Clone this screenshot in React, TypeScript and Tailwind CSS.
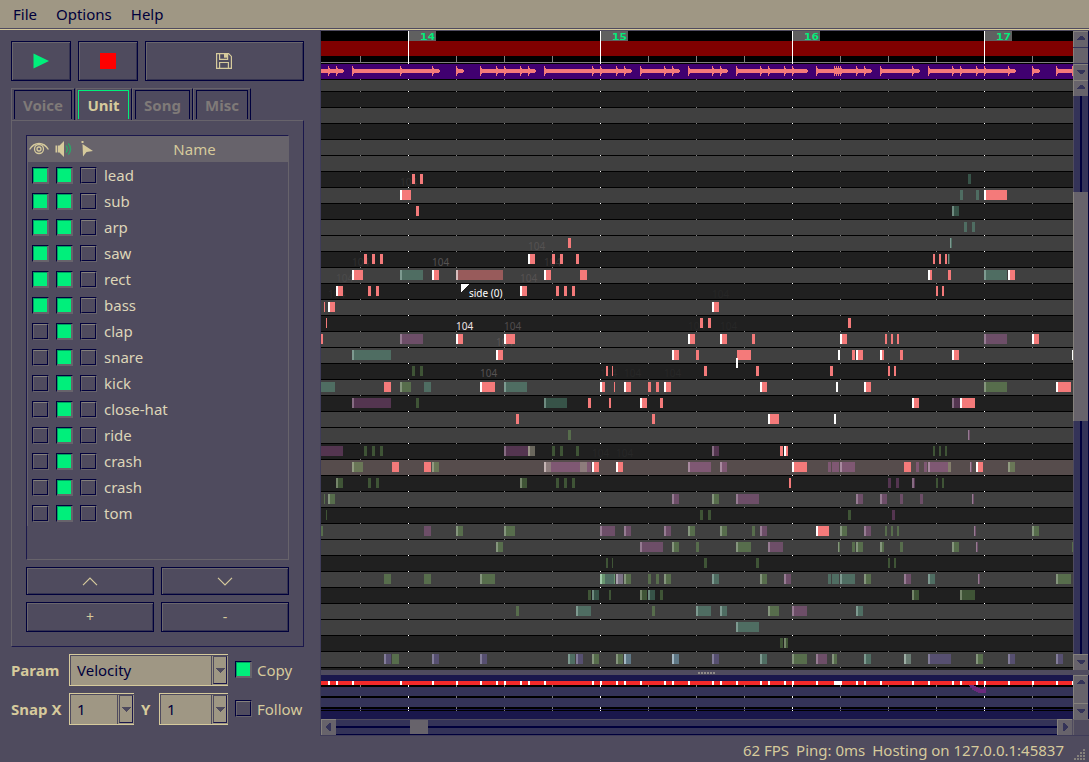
import React from "react";

const darkRows = new Set([1, 3, 6, 8, 11, 13, 15, 18, 20, 23, 25, 27, 30, 32, 35, 37]);
const selectedRow = 24;

// One string per lane: kind, start and length of each note. A capital kind has a velocity head.
const lanes: Record<number, string> = {
  6: "r412:3 r420:3 t968:3",
  7: "R400:11 t960:3 t976:3 R984:23",
  8: "r416:3 T952:7",
  9: "t964:3 t972:3",
  10: "r568:3 T950:2",
  11: "r364:3 r372:3 r380:3 R528:7 r552:3 r560:3 r576:3 r933:2 r939:2 r945:2 T948:2",
  12: "R352:11 T400:23 R432:7 D456:47 R544:7 r580:7 R928:4 r948:3 T984:23 R1008:7",
  13: "R336:7 r368:3 r376:3 R520:7 r556:3 r564:3 r572:3 r936:2 r942:2",
  14: "r324:1 R328:7 R712:7",
  15: "r326:1 r700:3 r708:3 r848:3",
  16: "r321:2 P400:23 R456:7 R504:11 R688:7 R720:7 r752:3 R840:7 r885:2 r891:2 r897:2 P984:23 R1032:7",
  17: "T352:39 R496:7 R672:7 r696:3 r737:14 R838:2 r852:3 R856:7 R880:4 r900:3 R952:7 R1072:1",
  18: "g412:3 g420:3 r606:2 r612:1 r704:3 r756:3 r830:3 r888:2 r894:2",
  19: "t321:14 r384:7 G400:11 t424:7 R480:15 T504:23 R600:5 r614:1 R624:7 r648:3 r656:3 R664:7 R760:7 R836:2 R864:7 G984:23 R1056:15",
  20: "P352:39 g416:3 T544:23 r588:3 r609:2 R640:7 r660:3 R912:7 P952:8 R960:15",
  21: "r516:3 r652:3 R768:11 R834:2",
  22: "g568:3 P968:2",
  23: "p321:22 g364:3 g372:3 g380:3 P504:24 M528:7 g552:3 g560:3 g576:3 P712:7 r780:3 R784:4 g933:2 g939:2 g945:2",
  24: "G352:11 r392:7 r424:7 G432:7 M544:7 p551:40 m580:7 R592:7 R616:7 P688:23 P720:7 R792:15 p828:3 p832:7 P840:15 r904:7 p916:3 p924:3 P928:20 o948:3 P970:2 R976:7 G1008:7",
  25: "G336:7 g368:3 g376:3 G520:7 g556:3 g564:3 g572:3 r789:2 p888:3 p896:3 P912:3 g936:2 g942:2",
  26: "g324:1 G328:7 P672:7 G712:7 P736:23 P856:7 P880:7 p900:3 p920:3 P972:2",
  27: "g326:1 g700:3 g708:3 g848:3 p892:3",
  28: "g321:2 p424:7 G456:7 G504:11 P600:15 P624:7 P664:7 G688:7 G720:7 g752:3 P760:7 R816:13 G840:7 P864:7 g885:2 g891:2 g897:2 P974:2 G1032:7",
  29: "G496:7 P640:23 G672:7 g696:3 G736:15 P768:15 G838:2 g852:3 G856:7 G880:4 g900:3 G952:7 P976:2 g1072:1",
  30: "g606:2 g612:1 g704:3 g756:3 g888:2 g894:2",
  31: "g384:7 g424:7 G480:15 T600:15 E600:5 e614:1 L616:7 G624:7 g648:3 g656:3 G664:7 T712:7 G760:7 P784:7 t828:3 t832:7 T840:15 G864:7 P904:7 T928:7 P978:2 G1056:15",
  32: "g588:3 T592:7 g609:2 G640:7 T648:7 g660:3 G912:7 G960:15",
  33: "g516:3 T576:15 g652:3 T696:15 T720:7 G768:11 P792:15 T856:7",
  34: "T736:23",
  35: "g780:3 G784:4",
  36: "S384:7 g392:7 S432:7 S480:7 T568:7 S576:7 G592:7 G616:7 B624:7 B672:7 S712:7 T760:7 G792:15 P816:11 G832:5 T864:7 C904:7 S928:23 G976:7 S1008:7 S1056:7",
};

// [light lane, dark lane, selected lane]
const bodyColors: Record<string, [string, string, string]> = {
  r: ["#f47a7a", "#f47a7a", "#f47a7a"],
  d: ["#985b5b", "#985b5b", "#985b5b"],
  g: ["#576d4c", "#3f5436", "#6a7757"],
  t: ["#4f6d62", "#375348", "#5d7268"],
  p: ["#6d4e68", "#543550", "#7f5873"],
  m: ["#77706a", "#6a675d", "#8d7c7c"],
  o: ["#7f7d6c", "#6a675d", "#847e6b"],
  s: ["#564f70", "#3e3758", "#564f70"],
  b: ["#5f7886", "#47606e", "#5f7886"],
  l: ["#7b7284", "#7b7284", "#7b7284"],
  c: ["#697b72", "#697b72", "#697b72"],
  e: ["#6a9770", "#6a9770", "#6a9770"],
};
const headColors: Record<string, [string, string, string]> = {
  r: ["#ffffff", "#ffffff", "#ffffff"],
  d: ["#d6bcbc", "#d6bcbc", "#d6bcbc"],
  g: ["#84957c", "#748569", "#919b80"],
  t: ["#7d9a90", "#6d8a7f", "#8a9b92"],
  p: ["#967b92", "#866b82", "#a98aa0"],
  m: ["#a8a09c", "#999587", "#c4b3b3"],
  o: ["#a8a09c", "#999587", "#c4b3b3"],
  s: ["#827c99", "#726c89", "#827c99"],
  b: ["#a3b7c3", "#93a7b3", "#a3b7c3"],
  l: ["#a9a0ae", "#a9a0ae", "#a9a0ae"],
  c: ["#9cada4", "#9cada4", "#9cada4"],
  e: ["#9fc9a8", "#9fc9a8", "#9fc9a8"],
};

const measures = [408, 600, 792, 984];
const beats = [360, 456, 504, 552, 648, 696, 744, 840, 888, 936, 1032];

const waves: [number, number, number[]][] = [
  [321, 343, [328, 336]],
  [352, 439, [352, 400, 432]],
  [456, 463, [456]],
  [480, 535, [480, 496, 504, 520, 528]],
  [544, 631, [544, 592, 600, 616, 624]],
  [640, 679, [640, 664, 672]],
  [688, 727, [688, 712, 720]],
  [736, 807, [736, 760, 768, 784, 792]],
  [816, 871, [816, 834, 836, 838, 840, 856, 864]],
  [880, 919, [880, 912]],
  [928, 1015, [928, 952, 960, 976, 984, 1008]],
  [1032, 1039, [1032]],
  [1056, 1073, [1056, 1072]],
];

const velocityLabels: [number, number, string][] = [
  [400, 186, "#303030"], [352, 266, "#303030"], [336, 282, "#4b4b4b"], [328, 298, "#2b2b2b"],
  [432, 266, "#555252"], [528, 250, "#555252"], [544, 266, "#373535"], [520, 282, "#565252"],
  [456, 330, "#f0e2e2"], [504, 330, "#504c4c"], [496, 346, "#5a5656"], [480, 377, "#565252"],
  [600, 377, "#282828"], [624, 377, "#272727"], [664, 377, "#272727"], [592, 457, "#272727"],
  [616, 457, "#272727"], [712, 298, "#262626"], [688, 330, "#272727"], [720, 330, "#272727"],
];

const onsets = [
  328, 336, 352, 400, 432, 456, 480, 496, 504, 520, 528, 544, 592, 600, 616, 624, 640, 664, 672, 688, 712, 720, 736,
  760, 768, 784, 792, 816, 834, 836, 838, 840, 856, 864, 880, 912, 928, 952, 960, 976, 984, 1008, 1032, 1056, 1072,
];

function Lane({ row, text }: { row: number; text: string }) {
  const tone = row === selectedRow ? 2 : darkRows.has(row) ? 1 : 0;
  const y = 78 + row * 16;
  return (
    <g>
      {text.split(" ").map((note) => {
        const kind = note[0].toLowerCase();
        const hasHead = note[0] !== kind;
        const [x, w] = note.slice(1).split(":").map(Number);
        const head = w === 2 && kind !== "r" ? 1 : Math.min(2, w);
        return (
          <g key={note}>
            <rect x={x} y={y} width={w} height={10} fill={bodyColors[kind][tone]} />
            {hasHead && <rect x={x} y={y} width={head} height={10} fill={headColors[kind][tone]} />}
          </g>
        );
      })}
    </g>
  );
}

function PianoRoll() {
  const rows = Array.from({ length: 38 }, (_, i) => i);
  return (
    <svg viewBox="321 31 752 639" width={752} height={639} shapeRendering="crispEdges" className="block shrink-0">
      <rect x={321} y={31} width={752} height={639} fill="#000" />
      <rect x={321} y={41} width={752} height={15} fill="#800000" />
      <rect x={321} y={62} width={752} height={1} fill="#808080" />
      {beats.map((x) => (
        <rect key={x} x={x} y={56} width={1} height={6} fill="#808080" />
      ))}
      {measures.map((x, i) => (
        <g key={x}>
          <rect x={x + 1} y={31} width={27} height={10} fill="#606060" />
          <rect x={x} y={31} width={1} height={33} fill="#fff" />
          <text
            x={x + 12}
            y={39.5}
            textLength={15}
            lengthAdjust="spacingAndGlyphs"
            className="fill-[#00ef7b] font-['DejaVu_Sans_Mono',monospace] text-[9px] font-bold"
          >
            {14 + i}
          </text>
        </g>
      ))}
      <rect x={321} y={64} width={752} height={15} fill="#400070" />
      {waves.map(([start, end, ticks]) => (
        <g key={start} fill="#f47a7a">
          <rect x={start} y={69} width={end - start} height={4} />
          <rect x={end} y={70} width={end < 1073 ? 1 : 0} height={2} />
          {ticks.map((x) => (
            <g key={x}>
              <rect x={x} y={66} width={1} height={10} />
              <rect x={x + 1} y={68} width={1} height={6} />
            </g>
          ))}
        </g>
      ))}
      {rows.map((r) => (
        <rect
          key={r}
          x={321}
          y={r === 0 ? 80 : 76 + r * 16}
          width={752}
          height={r === 0 ? 11 : r === 37 ? 2 : 15}
          fill={r === selectedRow ? "#564c4c" : darkRows.has(r) ? "#202020" : "#404040"}
        />
      ))}
      {[79, ...rows.slice(0, 37).map((r) => 91 + r * 16)].map((y) => (
        <g key={y}>
          {beats.map((x) => (
            <rect key={x} x={x} y={y} width={1} height={1} fill="#808080" />
          ))}
          {measures.map((x) => (
            <rect key={x} x={x} y={y} width={1} height={1} fill="#fff" />
          ))}
        </g>
      ))}
      {velocityLabels.map(([x, y, fill]) => (
        <text key={`${x}-${y}`} x={x} y={y} fill={fill} className="font-['Noto_Sans',sans-serif] text-[10px]">
          104
        </text>
      ))}
      {Object.entries(lanes).map(([row, text]) => (
        <Lane key={row} row={Number(row)} text={text} />
      ))}
      <rect x={736} y={358} width={2} height={10} fill="#fff" />
      <path d="M461 284h8l-8 8z" fill="#fff" />
      <text x={469} y={297} className="fill-white font-['Noto_Sans',sans-serif] text-[10px]">
        side (0)
      </text>
    </svg>
  );
}

function ParamLane() {
  return (
    <svg viewBox="321 675 752 44" width={752} height={44} shapeRendering="crispEdges" className="block shrink-0">
      <rect x={321} y={675} width={752} height={44} fill="#1a174c" />
      <rect x={321} y={685} width={752} height={26} fill="#000" />
      <rect x={321} y={687} width={752} height={9} fill="#343358" />
      <rect x={321} y={698} width={752} height={9} fill="#343358" />
      <rect x={321} y={709} width={752} height={1} fill="#1a174c" />
      <rect x={321} y={681} width={752} height={4} fill="#f42a2a" />
      <path d="M969 685h5v1h2v1h2v1h2v1h4v-2h2v6h-8v-1h-2v-1h-2v-1h-2v-2h-2v-2h-1z" fill="#6a2a7d" />
      {[...beats, ...measures].map((x) => (
        <g key={x} fill={measures.includes(x) ? "#fff" : "#808080"}>
          <rect x={x} y={685} width={1} height={2} />
          <rect x={x} y={696} width={1} height={2} />
          <rect x={x} y={707} width={1} height={2} />
          <rect x={x} y={710} width={1} height={1} />
        </g>
      ))}
      {onsets.map((x) => (
        <rect key={x} x={x} y={681} width={2} height={4} fill="#fff" />
      ))}
    </svg>
  );
}

const arrowShapes = {
  up: "M4 9V8L7 5h2l3 3v1z",
  down: "M4 6v1l3 3h2l3-3V6z",
  left: "M10 4H9L5 7v2l4 3h1z",
  right: "M6 4h1l4 3v2l-4 3H6z",
};

function ArrowButton({ dir }: { dir: keyof typeof arrowShapes }) {
  return (
    <div className="h-4 w-[15px] shrink-0 border-t border-l border-[#85817c] bg-[#67636b]">
      <svg viewBox="1 1 14 15" className="block h-[15px] w-[14px]" shapeRendering="crispEdges">
        <path d={arrowShapes[dir]} fill="#343358" />
      </svg>
    </div>
  );
}

function Handle({ className }: { className: string }) {
  return <div className={`w-[15px] shrink-0 border-l border-[#85817c] bg-[#67636b] ${className}`} />;
}

function Track({ className }: { className: string }) {
  return (
    <div className={`flex w-[15px] justify-center border-l border-[#4f4b5e] bg-[#343358] ${className}`}>
      <div className="w-0.5 bg-[#00003c]" />
    </div>
  );
}

function VScroll({ className, children }: { className: string; children: React.ReactNode }) {
  return <div className={`flex w-4 flex-col border-r border-[#00003c] bg-[#343358] ${className}`}>{children}</div>;
}

function Button({ className, children }: { className: string; children: React.ReactNode }) {
  return (
    <button
      className={`flex items-center justify-center border border-[#00003c] shadow-[inset_1px_1px_#6a666c,inset_-1px_-1px_#343250] ${className}`}
    >
      {children}
    </button>
  );
}

function Check({ on }: { on: boolean }) {
  return (
    <span className="block size-[17px] shrink-0 border border-t-[#00003c] border-r-[#67636b] border-b-[#67636b] border-l-[#00003c]">
      <span
        className={
          on
            ? "block size-[15px] border-r border-b border-[#67636b] bg-[#00ef7b] shadow-[inset_1px_1px_#00a060]"
            : "block size-[15px] border border-[#00003c] border-t-[#85817c] border-l-[#67636b]"
        }
      />
    </span>
  );
}

function Combo({ value, className }: { value: string; className: string }) {
  return (
    <div
      className={`flex h-8 shrink-0 items-center border-y border-l border-[#d6ca9c] bg-[#9f9784] pr-px pl-[7px] text-[#00003c] shadow-[inset_1px_1px_#4f4b5e] ${className}`}
    >
      <span className="flex-1">{value}</span>
      <span className="flex h-full w-4 items-center border-l border-[#4f4b5e] py-px pl-px">
        <span className="flex h-full flex-1 items-center justify-center border border-[#4f4b5e] border-r-[#1a174c] border-b-[#1a174c]">
          <svg viewBox="0 0 9 5" className="h-[5px] w-[9px]" shapeRendering="crispEdges">
            <path d="M0 0h9L5 4.5H4z" fill="#4f4b5e" />
          </svg>
        </span>
      </span>
    </div>
  );
}

const units: [string, boolean][] = [
  ["lead", true], ["sub", true], ["arp", true], ["saw", true], ["rect", true], ["bass", true], ["clap", false],
  ["snare", false], ["kick", false], ["close-hat", false], ["ride", false], ["crash", false], ["crash", false],
  ["tom", false],
];

function Tab({ label, className }: { label: string; className: string }) {
  return (
    <div className={`flex h-8 border-t border-l border-r border-t-[#67636b] border-r-[#00003c] border-l-[#67636b] px-0.5 pt-px ${className}`}>
      <div className="flex h-[29px] flex-1 items-center justify-center border border-b-0 border-[#00003c] text-[#7f7a78]">{label}</div>
    </div>
  );
}

function Sidebar() {
  return (
    <aside className="flex w-80 shrink-0 flex-col pt-[11px] pl-[11px]">
      <div className="flex h-10 gap-[7px]">
        <Button className="w-[60px]">
          <svg viewBox="0 0 16 16" className="size-4">
            <path d="M0.5 0.5 16 8 0.5 15.5z" fill="#00ef7b" />
          </svg>
        </Button>
        <Button className="w-[60px]">
          <span className="size-4 bg-[#ff0000]" />
        </Button>
        <Button className="w-[159px] pr-px">
          <svg viewBox="0 0 16 16" className="size-4" fill="none" stroke="#d6ca9c" strokeWidth="1.2">
            <path d="M.6.6h12l2.8 2.8v12H.6z" />
            <path d="M3.600 1v5.400h8V1M3.600 15.500V9.500h8.800v6" />
            <path d="M8 1h3.500v3.700H8z" fill="#d6ca9c" stroke="none" />
          </svg>
        </Button>
      </div>

      <div className="mt-[7px] flex h-8 font-bold">
        <Tab label="Voice" className="w-16" />
        <div className="ml-px flex h-8 w-14 border border-t-[#67636b] border-r-[#00003c] border-b-0 border-l-[#67636b] pt-px pr-0.5 pl-px">
          <div className="flex h-[29px] flex-1 items-center justify-center border border-b-0 border-[#00ef7b] text-[#d6ca9c]">Unit</div>
        </div>
        <Tab label="Song" className="w-[61px]" />
        <Tab label="Misc" className="w-[58px]" />
      </div>

      <div className="flex h-[527px] w-[293px] flex-col border border-t-[#67636b] border-r-[#1a174c] border-b-[#1a174c] border-l-[#67636b] px-[14px] pt-[14px]">
        <div className="h-[425px] w-[263px] border border-t-[#1a174c] border-r-[#67636b] border-b-[#67636b] border-l-[#1a174c]">
          <div className="flex h-[26px] items-center bg-[#67636b] pl-0.5 text-[#d6ca9c]">
            <svg viewBox="0 0 20 14" className="h-[14px] w-5" fill="none" stroke="#d6ca9c" strokeWidth="1.3">
              <path d="M.6 7.500C3 3.500 6.500 1.500 10 1.500s7 2 9.400 6" />
              <circle cx="10" cy="7" r="4.500" />
              <circle cx="10" cy="7" r="2" />
            </svg>
            <svg viewBox="0 0 18 18" className="ml-1.5 size-[18px]" fill="none">
              <path d="M.5 5.500h1.800v7H.5zM3 5.500h1.500l4.500-4.500v16L4.500 12.500H3z" fill="#d6ca9c" />
              <path d="M11 5.500c1.600 2 1.600 5 0 7M13.300 3.500c3 3 3 8 0 11" stroke="#2fa368" strokeWidth="1.500" />
            </svg>
            <svg viewBox="0 0 14 16" className="ml-2 h-4 w-[14px]">
              <path d="M1.500 3l10.500 7-6.500 1L2 15.500z" fill="#d6ca9c" />
              <path d="M.5 0h2v2h-2z" fill="#d6ca9c" />
            </svg>
            <span className="ml-3 flex-1 pr-1.5 text-center">Name</span>
          </div>
          {units.map(([name, shown], i) => (
            <div key={i} className="flex h-[26px] items-center gap-[7px] border-l border-[#67636b] pl-1 text-[#ddd5b8]">
              <Check on={shown} />
              <Check on />
              <Check on={false} />
              <span>{name}</span>
            </div>
          ))}
        </div>
        <div className="mt-[7px] grid grid-cols-[128px_128px] gap-[7px] text-[#d6ca9c]">
          <Button className="h-7">
            <svg viewBox="0 0 16 9" className="h-[9px] w-4" fill="none" stroke="#d6ca9c" strokeWidth="1.2">
              <path d="M1 8.200 8 1.200l7 7" />
            </svg>
          </Button>
          <Button className="h-7">
            <svg viewBox="0 0 16 9" className="h-[9px] w-4" fill="none" stroke="#d6ca9c" strokeWidth="1.2">
              <path d="M1 .8l7 7 7-7" />
            </svg>
          </Button>
          <Button className="h-[30px] text-[14px]">+</Button>
          <Button className="h-[30px] text-[14px]">-</Button>
        </div>
      </div>

      <div className="mt-[7px] flex h-8 items-center">
        <span className="w-[58px] font-bold">Param</span>
        <Combo value="Velocity" className="w-[159px]" />
        <span className="mr-[5px] ml-[7px] -mt-0.5">
          <Check on />
        </span>
        Copy
      </div>
      <div className="mt-[7px] flex h-8 items-center">
        <span className="w-[58px] whitespace-nowrap font-bold">Snap X</span>
        <Combo value="1" className="w-[65px]" />
        <span className="w-[25px] pl-[7px] font-bold">Y</span>
        <Combo value="1" className="w-[69px]" />
        <span className="mr-[5px] ml-[7px] -mt-0.5">
          <Check on={false} />
        </span>
        Follow
      </div>
    </aside>
  );
}

export default function App() {
  return (
    <div className="flex h-[762px] w-[1089px] flex-col overflow-hidden bg-[#4f4b5e] font-['Noto_Sans',sans-serif] text-[15px] leading-5 text-[#d6ca9c]">
      <nav className="flex h-7 shrink-0 items-center gap-[19px] bg-[#9f9784] pb-px pl-[13px] text-[#00003c]">
        <span>File</span>
        <span>Options</span>
        <span>Help</span>
      </nav>
      <div className="h-px shrink-0 bg-[#4f4b5e]" />
      <div className="h-px shrink-0 bg-[#d6ca9c]" />
      <main className="flex h-[706px] shrink-0">
        <Sidebar />
        <section className="flex flex-1 flex-col border-b border-l border-[#3f3c58] pt-px">
          <div className="flex h-[639px]">
            <PianoRoll />
            <div>
              <VScroll className="h-[49px]">
                <ArrowButton dir="up" />
                <div className="flex h-[17px] flex-col justify-center">
                  <Handle className="h-[15px]" />
                </div>
                <ArrowButton dir="down" />
              </VScroll>
              <VScroll className="h-[590px]">
                <ArrowButton dir="up" />
                <Track className="h-24" />
                <Handle className="h-[229px]" />
                <Track className="h-[233px]" />
                <ArrowButton dir="down" />
              </VScroll>
            </div>
          </div>
          <div className="flex h-[5px] items-center justify-center gap-px bg-[#4f4b5e] pl-0.5">
            {[0, 1, 2, 3, 4, 5].map((i) => (
              <span key={i} className="size-0.5 bg-[#8f8a88]" />
            ))}
          </div>
          <div className="flex h-11">
            <ParamLane />
            <VScroll className="h-11">
              <ArrowButton dir="up" />
              <Handle className="h-3" />
              <ArrowButton dir="down" />
            </VScroll>
          </div>
          <div className="flex h-4">
            <ArrowButton dir="left" />
            <div className="flex w-[721px] items-center border-t border-b border-t-[#4f4b5e] border-b-[#00003c] bg-[#343358]">
              <div className="h-0.5 w-[74px] bg-[#00003c]" />
              <div className="h-[14px] w-[18px] bg-[#67636b]" />
              <div className="h-0.5 flex-1 bg-[#00003c]" />
            </div>
            <ArrowButton dir="right" />
            <div className="ml-px w-4 border-t border-l border-[#67636b] bg-[#4f4b5e]" />
          </div>
        </section>
      </main>
      <footer className="flex h-[26px] shrink-0 items-center justify-end gap-[7px] pt-0.5 pr-1">
        <span>62 FPS</span>
        <span>Ping: 0ms</span>
        <span>Hosting on 127.0.0.1:45837</span>
        <svg viewBox="0 0 14 14" className="h-[14px] w-[14px] self-end" fill="#85817c" shapeRendering="crispEdges">
          <path d="M12 1h2v2h-2zM9 4h2v2H9zM12 4h2v2h-2zM6 7h2v2H6zM9 7h2v2H9zM12 7h2v2h-2zM3 10h2v2H3zM6 10h2v2H6zM9 10h2v2H9zM12 10h2v2h-2z" />
        </svg>
      </footer>
    </div>
  );
}
